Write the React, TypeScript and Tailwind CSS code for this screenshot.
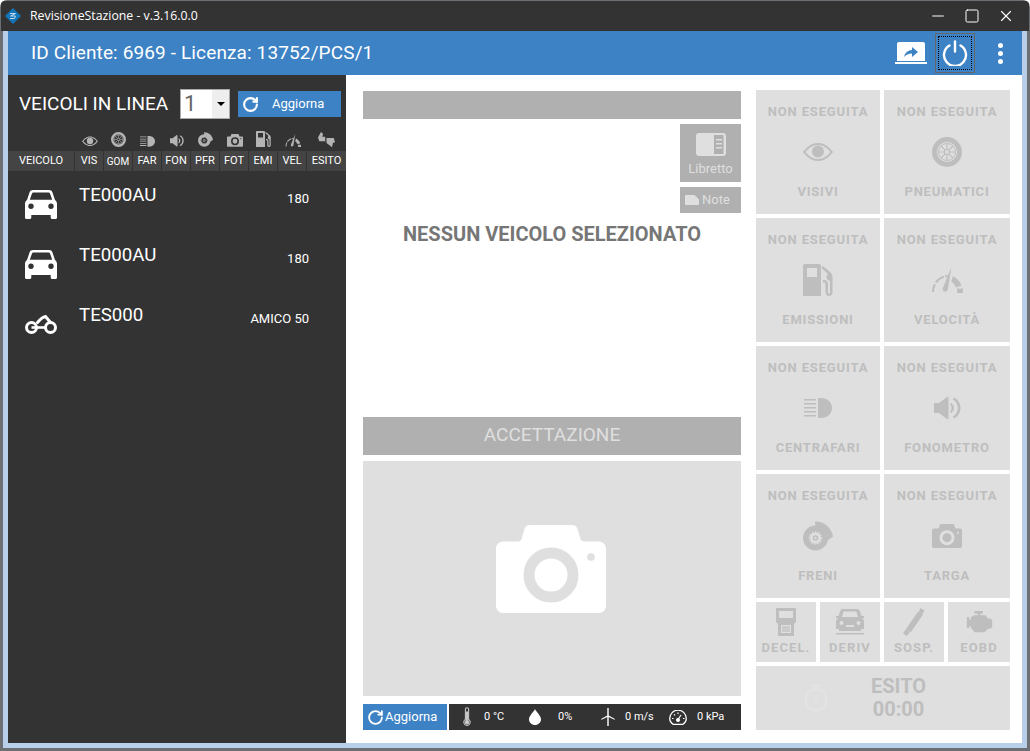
import type { ReactNode } from "react";
import { Minus, RotateCw, Square, X } from "lucide-react";

type IconProps = { className?: string };

function EyeIcon({ className }: IconProps) {
  return (
    <svg aria-hidden="true" className={className} viewBox="0 0 30 20" fill="currentColor">
      <path fillRule="evenodd" d="M15 1C8 1 3 6 0 10c3 4 8 9 15 9s12-5 15-9c-3-4-8-9-15-9Zm0 2c5.500 0 9.800 3.500 12.500 7-2.700 3.500-7 7-12.500 7S5.200 13.500 2.500 10C5.200 6.500 9.500 3 15 3Z" />
      <circle cx="15" cy="9.500" r="6" />
    </svg>
  );
}

function TyreIcon({ className }: IconProps) {
  return (
    <svg aria-hidden="true" className={className} viewBox="0 0 30 30" fill="none" stroke="currentColor">
      <circle cx="15" cy="15" r="12.500" strokeWidth="5" />
      <circle cx="15" cy="15" r="8.500" strokeWidth="1" />
      <circle cx="15" cy="15" r="2.500" strokeWidth="1.200" />
      <path d="M15 6.500v6M15 17.500v6M6.500 15h6M17.500 15h6M9 9l4.200 4.200M16.800 16.800 21 21M21 9l-4.200 4.200M13.200 16.800 9 21" strokeWidth="1.200" />
    </svg>
  );
}

function LampIcon({ className }: IconProps) {
  return (
    <svg aria-hidden="true" className={className} viewBox="0 0 28 20" fill="currentColor">
      <path d="M14 0h3c6 0 11 4 11 10s-5 10-11 10h-3Z" />
      <path d="M0 1h12v1.500H0ZM0 5h12v1.500H0ZM0 9h12v1.500H0ZM0 13h12v1.500H0ZM0 17h12v1.500H0Z" />
    </svg>
  );
}

function SpeakerIcon({ className }: IconProps) {
  return (
    <svg aria-hidden="true" className={className} viewBox="0 0 27 26" fill="currentColor">
      <path d="M0 8h5l8-6c.6-.4 1.500 0 1.500.8v20.400c0 .8-.9 1.200-1.500.8l-8-6H0Z" />
      <path d="M17 8c1.800 1 3 2.800 3 5s-1.200 4-3 5l-1-1.500c1-.8 1.500-2 1.500-3.500S17 10.300 16 9.500Z" />
      <path d="M20 2.500c3.800 2 6.500 6 6.500 10.500S23.800 21.500 20 23.500l-1.200-2c3-1.800 5-4.900 5-8.500s-2-6.700-5-8.500Z" />
    </svg>
  );
}

function BrakeIcon({ className, hole = "#dfdfdf" }: IconProps & { hole?: string }) {
  return (
    <svg aria-hidden="true" className={className} viewBox="0 0 30 30" fill="none" stroke="currentColor">
      <circle cx="12.500" cy="17" r="9" strokeWidth="7" />
      <circle cx="12.500" cy="17" r="6" stroke={hole} strokeWidth="1.500" strokeDasharray="1.500 1.500" />
      <circle cx="12.500" cy="17" r="2" strokeWidth="1.500" />
      <path d="M12 .5c8.500-.4 16.500 5.500 18 15l-5.500 4c-.7-7-5-12-12-13.500Z" fill="currentColor" stroke="none" />
    </svg>
  );
}

function CameraIcon({ className, hole = "#dfdfdf" }: IconProps & { hole?: string }) {
  return (
    <svg aria-hidden="true" className={className} viewBox="0 0 110 88">
      <path fill="currentColor" d="M0 24c0-4.500 3-7.500 7.500-7.500H22c2 0 3-1 3.500-2.500l3-10C29.300 1.500 31 0 34 0h42c3 0 4.700 1.500 5.500 4l3 10c.5 1.500 1.500 2.500 3.500 2.500h14.500c4.500 0 7.500 3 7.500 7.500v56.500c0 4.500-3 7.500-7.500 7.500H7.500C3 88 0 85 0 80.500Z" />
      <circle cx="55" cy="50" r="22" fill="none" stroke={hole} strokeWidth="11" />
      <circle cx="95" cy="32" r="3.800" fill={hole} />
    </svg>
  );
}

function PumpIcon({ className }: IconProps) {
  return (
    <svg aria-hidden="true" className={className} viewBox="0 0 30 32" fill="currentColor">
      <path fillRule="evenodd" d="M2 0h14c1.100 0 2 .9 2 2v30H0V2C0 .9.900 0 2 0Zm2 4v9h10V4Z" />
      <path d="M20 2l7 6c1.500 1.300 2.500 3 2.500 5v15.500c0 1.900-1.400 3.500-3.500 3.500s-3.500-1.600-3.500-3.500V20c0-.8-.6-1.500-1.500-1.500h-1V16h1c2.300 0 4 1.700 4 4v8.500c0 .6.400 1 1 1s1-.4 1-1V17c-2-.4-3.500-2-3.500-4 0-1.300.6-2.400 1.500-3.100L18.500 4Z" />
    </svg>
  );
}

function GaugeIcon({ className }: IconProps) {
  return (
    <svg aria-hidden="true" className={className} viewBox="0 0 32 26" fill="currentColor">
      <path d="M1 25c0-3 .7-5.800 2-8.300l1.800 1C3.700 20 3 22.400 3 25Z" />
      <path d="M4 15c2-3 5-5.300 8.500-6.300l.6 2c-3 .9-5.500 2.800-7.300 5.400Z" />
      <path d="M14 8.300c1.500-.2 2.500-.2 3.500-.1l-.3 2c-1-.1-1.800-.1-2.900.1Z" />
      <path d="M22 9.200c4 1.800 7 5.300 8.500 9.300L25 20.500c-.9-2.500-2.500-4.600-4.700-6Z" />
      <path d="M26 21.500h6V26h-6Z" />
      <path d="M20.500 0 17 21.500c-.2 2-1.600 3.500-3.200 3.300-1.700-.2-2.500-2-1.900-3.700Z" />
    </svg>
  );
}

function ThumbsIcon({ className }: IconProps) {
  return (
    <svg aria-hidden="true" className={className} viewBox="0 0 20 18" fill="currentColor">
      <path d="M3.500 0 6 2.500 5 5.500h3.500V11H1.500L0 6.500Z" />
      <path d="M10 7h8.500L20 12l-2.500 1-1 5-3-2.500-3.500-2.500Z" />
    </svg>
  );
}

function CarIcon({ className }: IconProps) {
  return (
    <svg aria-hidden="true" className={className} viewBox="0 0 32 29" fill="currentColor">
      <path fillRule="evenodd" d="M8 0h16c1.700 0 2.800.8 3.400 2.300L30 10c1.300 1 2 2.300 2 4v13.500c0 .9-.6 1.500-1.500 1.500h-3.300c-.9 0-1.500-.6-1.500-1.500V25H6.300v2.500c0 .9-.6 1.500-1.500 1.500H1.500C.6 29 0 28.400 0 27.500V14c0-1.700.7-3 2-4l2.600-7.700C5.200.8 6.300 0 8 0Zm.5 2.500c-.8 0-1.300.4-1.600 1.200L4.800 9.800h22.400l-2.100-6.100c-.3-.8-.8-1.200-1.600-1.200ZM6 13.500a2.700 2.700 0 1 0 0 5.400 2.700 2.700 0 0 0 0-5.400Zm20 0a2.700 2.700 0 1 0 0 5.400 2.700 2.700 0 0 0 0-5.400Z" />
    </svg>
  );
}

function BikeIcon({ className }: IconProps) {
  return (
    <svg aria-hidden="true" className={className} viewBox="0 0 32 19" fill="none" stroke="currentColor">
      <circle cx="6.500" cy="12.500" r="5" strokeWidth="3" />
      <circle cx="25.500" cy="12.500" r="5" strokeWidth="3" />
      <path d="M6.500 12.500H20" strokeWidth="2.600" />
      <path d="M12.500 7.500c2.500-3 5-5.500 8-6l5 6" strokeWidth="3" strokeLinecap="round" />
    </svg>
  );
}

function ObdIcon({ className }: IconProps) {
  return (
    <svg aria-hidden="true" className={className} viewBox="0 0 20 28" fill="currentColor">
      <path fillRule="evenodd" d="M0 0h20v14l-2 2v12H2V16l-2-2Zm3 3v7h14V3Zm2 14v8h10v-8Z" />
      <path d="M6 18h8v6H6Z" opacity="0.6" />
    </svg>
  );
}

function SideCarIcon({ className }: IconProps) {
  return (
    <svg aria-hidden="true" className={className} viewBox="0 0 28 26" fill="currentColor">
      <path fillRule="evenodd" d="M7 0h14c1.400 0 2.300.8 2.800 2l1.700 5H28v2h-2c1.300 1 2 2.300 2 4v7h-3v2H3v-2H0v-7c0-1.700.7-3 2-4H0V7h2.500l1.700-5C4.700.8 5.600 0 7 0Zm.5 2.500L6 8h16l-1.500-5.500ZM5.500 12a2 2 0 1 0 0 4 2 2 0 0 0 0-4Zm17 0a2 2 0 1 0 0 4 2 2 0 0 0 0-4ZM10 16v2h8v-2Z" />
      <path d="M0 24h28v1.500H0Z" />
    </svg>
  );
}

function ShockIcon({ className }: IconProps) {
  return (
    <svg aria-hidden="true" className={className} viewBox="0 0 22 28" fill="currentColor">
      <path d="M17 0l4.500 2.500-2 3.500-3.500-1.500Z" />
      <path d="M15 3.500l5 3L8 24l-5-3Z" />
      <path d="M3 21l4 2.500L4 28l-4-2.500Z" />
    </svg>
  );
}

function EngineIcon({ className }: IconProps) {
  return (
    <svg aria-hidden="true" className={className} viewBox="0 0 30 26" fill="currentColor">
      <path d="M9 0h10v3h-3v2h6l3 4h2c1.700 0 3 1.300 3 3v6c0 1.700-1.300 3-3 3h-2l-4 4H9l-3-4H5v-3H3v2H0V7h3v3h2V7l4-2h4V3H9Z" />
    </svg>
  );
}

function StopwatchIcon({ className }: IconProps) {
  return (
    <svg aria-hidden="true" className={className} viewBox="0 0 24 28" fill="none" stroke="currentColor" strokeWidth="2">
      <circle cx="12" cy="16" r="10.500" />
      <path d="M8 1.500h8M12 2v3.500M12 11v5M21 6l-2 2" />
    </svg>
  );
}

function BookletIcon({ className }: IconProps) {
  return (
    <svg aria-hidden="true" className={className} viewBox="0 0 30 23" fill="currentColor">
      <path fillRule="evenodd" d="M3 0h24c1.700 0 3 1.300 3 3v17c0 1.700-1.300 3-3 3H3c-1.700 0-3-1.300-3-3V3c0-1.700 1.300-3 3-3Zm15 2v19h9.500V2ZM20 6h6v1.500h-6Zm0 4h6v1.500h-6Zm0 4h6v1.500h-6Z" />
    </svg>
  );
}

function NoteIcon({ className }: IconProps) {
  return (
    <svg aria-hidden="true" className={className} viewBox="0 0 14 10" fill="currentColor">
      <path d="M1 0h8.500L14 4.500V9c0 .6-.4 1-1 1H1c-.6 0-1-.4-1-1V1c0-.6.4-1 1-1Z" />
    </svg>
  );
}

function ThermoIcon({ className }: IconProps) {
  return (
    <svg aria-hidden="true" className={className} viewBox="0 0 10 24" fill="none" stroke="currentColor" strokeWidth="1.300">
      <path d="M3 2.500a2 2 0 0 1 4 0V15a4 4 0 1 1-4 0Z" />
      <path d="M5 5v12" strokeWidth="2.400" />
      <circle cx="5" cy="18.500" r="2.200" fill="currentColor" />
    </svg>
  );
}

function DropIcon({ className }: IconProps) {
  return (
    <svg aria-hidden="true" className={className} viewBox="0 0 12 16" fill="currentColor">
      <path d="M6 0c1.200 3 6 6.500 6 10.200C12 13.400 9.300 16 6 16s-6-2.600-6-5.800C0 6.500 4.800 3 6 0Z" />
    </svg>
  );
}

function WindIcon({ className }: IconProps) {
  return (
    <svg aria-hidden="true" className={className} viewBox="0 0 14 18" fill="currentColor">
      <path d="M6.300 0h1.400v7.500l6.300 3.500-.6.700L7.700 9v9H6.300V9L.6 11.700 0 11l6.300-3.500Z" />
    </svg>
  );
}

function PressureIcon({ className }: IconProps) {
  return (
    <svg aria-hidden="true" className={className} viewBox="0 0 18 15" fill="none" stroke="currentColor" strokeWidth="1.200">
      <path d="M4 14.300C2 13 .7 11 .7 8.500a8.300 8.300 0 0 1 16.600 0c0 2.500-1.300 4.500-3.300 5.800Z" />
      <path d="M9 9.500 12 5M3 8.500h1.500M14 8.500h1.500M9 2.500V4M5 4.300l1 1" />
      <circle cx="9" cy="10" r="1.400" fill="currentColor" />
    </svg>
  );
}

function Logo() {
  return (
    <svg aria-hidden="true" className="h-4 w-4" viewBox="0 0 16 16">
      <path d="M8 0 16 8 8 16 0 8Z" fill="#1474b8" />
      <path d="M5 5.500h5.500M10.500 5.500 5.500 8h5l-1 2.500H5" fill="none" stroke="#bcd9ee" strokeWidth="1" />
    </svg>
  );
}

const CHECK_ICONS = [
  { key: "vis", node: <EyeIcon className="w-[16px]" /> },
  { key: "gom", node: <TyreIcon className="w-[15px]" /> },
  { key: "far", node: <LampIcon className="w-[15px]" /> },
  { key: "fon", node: <SpeakerIcon className="w-[14px]" /> },
  { key: "pfr", node: <BrakeIcon className="w-[15px]" hole="#333333" /> },
  { key: "fot", node: <CameraIcon className="w-[16px]" hole="#333333" /> },
  { key: "emi", node: <PumpIcon className="w-[15px]" /> },
  { key: "vel", node: <GaugeIcon className="w-[16px]" /> },
];

const COLUMNS = ["VIS", "GOM", "FAR", "FON", "PFR", "FOT", "EMI", "VEL"];

const VEHICLES = [
  { plate: "TE000AU", model: "180", bike: false },
  { plate: "TE000AU", model: "180", bike: false },
  { plate: "TES000", model: "AMICO 50", bike: true },
];

const MAIN_TILES: { label: string; icon: ReactNode }[] = [
  { label: "VISIVI", icon: <EyeIcon className="w-[30px]" /> },
  { label: "PNEUMATICI", icon: <TyreIcon className="w-[30px]" /> },
  { label: "EMISSIONI", icon: <PumpIcon className="w-[30px]" /> },
  { label: "VELOCITÀ", icon: <GaugeIcon className="w-[32px]" /> },
  { label: "CENTRAFARI", icon: <LampIcon className="w-[28px]" /> },
  { label: "FONOMETRO", icon: <SpeakerIcon className="w-[27px]" /> },
  { label: "FRENI", icon: <BrakeIcon className="w-[30px]" /> },
  { label: "TARGA", icon: <CameraIcon className="w-[30px]" /> },
];

const SMALL_TILES: { label: string; icon: ReactNode }[] = [
  { label: "DECEL.", icon: <ObdIcon className="h-[28px] w-[20px]" /> },
  { label: "DERIV", icon: <SideCarIcon className="h-[26px] w-[28px]" /> },
  { label: "SOSP.", icon: <ShockIcon className="h-[28px] w-[22px]" /> },
  { label: "EOBD", icon: <EngineIcon className="h-[22px] w-[29px]" /> },
];

function Tile({ label, icon }: { label: string; icon: ReactNode }) {
  return (
    <div className="flex flex-col items-center bg-[#dfdfdf] pt-[14px] text-[#bebebe]">
      <div className="text-[13px] leading-[15px] font-bold tracking-[0.85px]">NON ESEGUITA</div>
      <div className="flex h-[65px] items-center justify-center">{icon}</div>
      <div className="text-[13px] leading-[15px] font-bold tracking-[0.8px]">{label}</div>
    </div>
  );
}

function SidebarTable() {
  return (
    <>
      <div className="flex h-[20px] items-end pb-[4px] pl-[67px] text-[#b4b4b4]">
        {CHECK_ICONS.map((icon) => (
          <div className="flex w-[29px] justify-center" key={icon.key}>
            {icon.node}
          </div>
        ))}
        <div className="flex w-[39px] justify-center">
          <ThumbsIcon className="w-[17px]" />
        </div>
      </div>
      <div className="flex h-[20px] gap-px text-[11px] leading-[20px] text-white">
        <div className="w-[66px] bg-[#444444] text-center">VEICOLO</div>
        {COLUMNS.map((column) => (
          <div className={`w-[28px] bg-[#444444] text-center ${column === "GOM" ? "pt-px text-[10px]" : ""}`} key={column}>
            {column}
          </div>
        ))}
        <div className="flex-1 bg-[#444444] text-center">ESITO</div>
      </div>
      {VEHICLES.map((vehicle, index) => (
        <div className="flex h-[60px] items-start text-white" key={index}>
          {vehicle.bike ? (
            <BikeIcon className="mt-[24px] ml-[17px] h-[19px] w-[32px]" />
          ) : (
            <CarIcon className="mt-[19px] ml-[17px] h-[29px] w-[32px]" />
          )}
          <div className="mt-[12px] ml-[22px] w-[90px] text-[18.7px] leading-[24px]">{vehicle.plate}</div>
          <div className="mt-[20px] ml-auto pr-[37px] text-[13px] leading-[16px]">{vehicle.model}</div>
        </div>
      ))}
    </>
  );
}

export default function App() {
  return (
    <div className="h-[751px] w-[1030px] overflow-hidden rounded-t-[7px] bg-[#6b6e72] pt-px pr-[3px] pb-[3px] pl-[3px] font-['Roboto',sans-serif]">
      <div className="-mx-[2px] flex h-[30px] items-center bg-[#333333] pr-[14px] pl-[4px] text-white">
        <Logo />
        <span className="ml-[9px] font-['Open_Sans',sans-serif] text-[12.3px]">RevisioneStazione - v.3.16.0.0</span>
        <Minus className="ml-auto h-[18px] w-[18px] text-[#bbbbbb]" strokeWidth={2} />
        <Square className="ml-[17px] h-[16px] w-[16px]" strokeWidth={1.5} />
        <X className="ml-[17px] h-[18px] w-[18px]" strokeWidth={1.5} />
      </div>

      <div className="flex h-[717px] flex-col bg-[#b9cfe9] px-[5px] pb-[5px]">
        <div className="flex h-[44px] shrink-0 items-center bg-[#3d82c4] pl-[23px] text-white">
          <span className="text-[19px] tracking-[0.13px]">ID Cliente: 6969 - Licenza: 13752/PCS/1</span>
          <svg aria-hidden="true" className="ml-auto h-[22px] w-[32px]" viewBox="0 0 32 22" fill="currentColor">
            <path fillRule="evenodd" d="M4 0h24c1.100 0 2 .9 2 2v17H2V2c0-1.100.9-2 2-2Zm13 5v3c-4 .3-7 2.500-8 7 2-2.300 4.500-3.500 8-3.500V15l6-5Z" />
            <path d="M0 20h32v2H0Z" />
          </svg>
          <div className="mr-[6px] ml-[8px] flex h-[40px] w-[40px] items-center justify-center border border-[#666666] p-[2px]">
            <div className="flex h-full w-full items-center justify-center border border-dotted border-black">
              <svg aria-hidden="true" className="h-[26px] w-[26px]" viewBox="0 0 26 26" fill="none" stroke="currentColor" strokeWidth="2.400" strokeLinecap="round">
                <path d="M13 1.500v10" />
                <path d="M7.500 5.500a11 11 0 1 0 11 0" />
              </svg>
            </div>
          </div>
          <div className="mr-[19px] ml-[17px] flex flex-col gap-[3px]">
            <span className="h-[5px] w-[5px] rounded-full bg-white" />
            <span className="h-[5px] w-[5px] rounded-full bg-white" />
            <span className="h-[5px] w-[5px] rounded-full bg-white" />
          </div>
        </div>

        <div className="flex min-h-0 flex-1">
          <aside className="w-[338px] shrink-0 bg-[#333333]">
            <div className="flex h-[56px] items-center pt-[2px] pl-[11px] text-white">
              <span className="w-[161px] text-[19px]">VEICOLI IN LINEA</span>
              <div className="flex h-[30px] w-[50px] border border-[#aaaaaa] bg-white text-[22px] leading-[28px] text-[#666666]">
                <span className="w-[31px] pl-[3px]">1</span>
                <span className="flex flex-1 items-center justify-center bg-[#eeeeee]">
                  <span className="h-0 w-0 border-x-[4px] border-t-[4px] border-x-transparent border-t-black" />
                </span>
              </div>
              <div className="ml-[8px] flex h-[26px] w-[103px] items-center bg-[#3d82c4] pl-[4px]">
                <RotateCw className="h-[17px] w-[17px]" strokeWidth={3} />
                <span className="ml-[9px] pl-[4px] text-[13px]">Aggiorna</span>
              </div>
            </div>
            <SidebarTable />
          </aside>

          <main className="flex flex-1 gap-[15px] bg-white pt-[15px] pr-[12px] pl-[17px]">
            <div className="flex h-[640px] w-[378px] shrink-0 flex-col">
              <div className="mt-px h-[28px] shrink-0 bg-[#b0b0b0]" />
              <div className="mt-[5px] flex flex-col items-end gap-[5px]">
                <div className="flex h-[58px] w-[61px] flex-col items-center bg-[#b0b0b0] pt-[9px] text-[#dfdfdf]">
                  <BookletIcon className="h-[23px] w-[30px]" />
                  <span className="mt-[5px] text-[13px] leading-[16px]">Libretto</span>
                </div>
                <div className="flex h-[26px] w-[61px] items-center gap-[3px] bg-[#b0b0b0] pl-[5px] text-[13px] text-[#dfdfdf]">
                  <NoteIcon className="h-[10px] w-[14px]" />
                  Note
                </div>
              </div>
              <div className="mt-[9px] text-center text-[20px] leading-[24px] font-bold text-[#767676]">NESSUN VEICOLO SELEZIONATO</div>
              <div className="mt-[171px] flex h-[38px] shrink-0 items-center justify-center bg-[#b0b0b0] pb-[2px] text-[19px] text-[#dfdfdf]">ACCETTAZIONE</div>
              <div className="mt-[6px] flex h-[235px] shrink-0 items-center justify-center bg-[#dfdfdf] pr-[2px] pb-[20px] text-white">
                <CameraIcon className="h-[88px] w-[110px]" />
              </div>
              <div className="mt-[8px] flex h-[26px] shrink-0 gap-[2px] text-[12px] text-white">
                <div className="flex w-[84px] items-center gap-px bg-[#3d82c4] pl-[4px] text-[13px]">
                  <RotateCw className="h-[17px] w-[17px]" strokeWidth={2.6} />
                  Aggiorna
                </div>
                <div className="flex flex-1 items-center bg-[#333333] text-[11px]">
                  <ThermoIcon className="ml-[14px] h-[20px] w-[8px] text-[#cccccc]" />
                  <span className="ml-[13px] w-[41px]">0 °C</span>
                  <DropIcon className="ml-[4px] h-[16px] w-[12px]" />
                  <span className="ml-[17px] w-[31px]">0%</span>
                  <WindIcon className="ml-[12px] h-[18px] w-[14px]" />
                  <span className="ml-[10px] w-[36px]">0 m/s</span>
                  <PressureIcon className="ml-[8px] h-[15px] w-[18px]" />
                  <span className="ml-[10px]">0 kPa</span>
                </div>
              </div>
            </div>

            <div className="flex w-[254px] shrink-0 flex-col gap-[4px]">
              <div className="grid grid-cols-[124px_126px] auto-rows-[124px] gap-[4px]">
                {MAIN_TILES.map((tile) => (
                  <Tile icon={tile.icon} key={tile.label} label={tile.label} />
                ))}
              </div>
              <div className="grid w-[254px] grid-cols-[60px_60px_60px_62px] gap-[4px]">
                {SMALL_TILES.map((tile) => (
                  <div className="flex h-[60px] flex-col items-center bg-[#dfdfdf] pt-[5px] text-[#bebebe]" key={tile.label}>
                    <div className="flex h-[30px] items-center">{tile.icon}</div>
                    <span className="mt-[3px] text-[13px] leading-[15px] font-bold tracking-[1.1px]">{tile.label}</span>
                  </div>
                ))}
              </div>
              <div className="flex h-[64px] w-[254px] items-center bg-[#dfdfdf] text-[#bebebe]">
                <StopwatchIcon className="ml-[48px] h-[28px] w-[24px] text-[#e3e3e3]" />
                <div className="ml-[43px] text-center text-[20px] leading-[23px] font-bold">
                  <div>ESITO</div>
                  <div>00:00</div>
                </div>
              </div>
            </div>
          </main>
        </div>
      </div>
    </div>
  );
}
